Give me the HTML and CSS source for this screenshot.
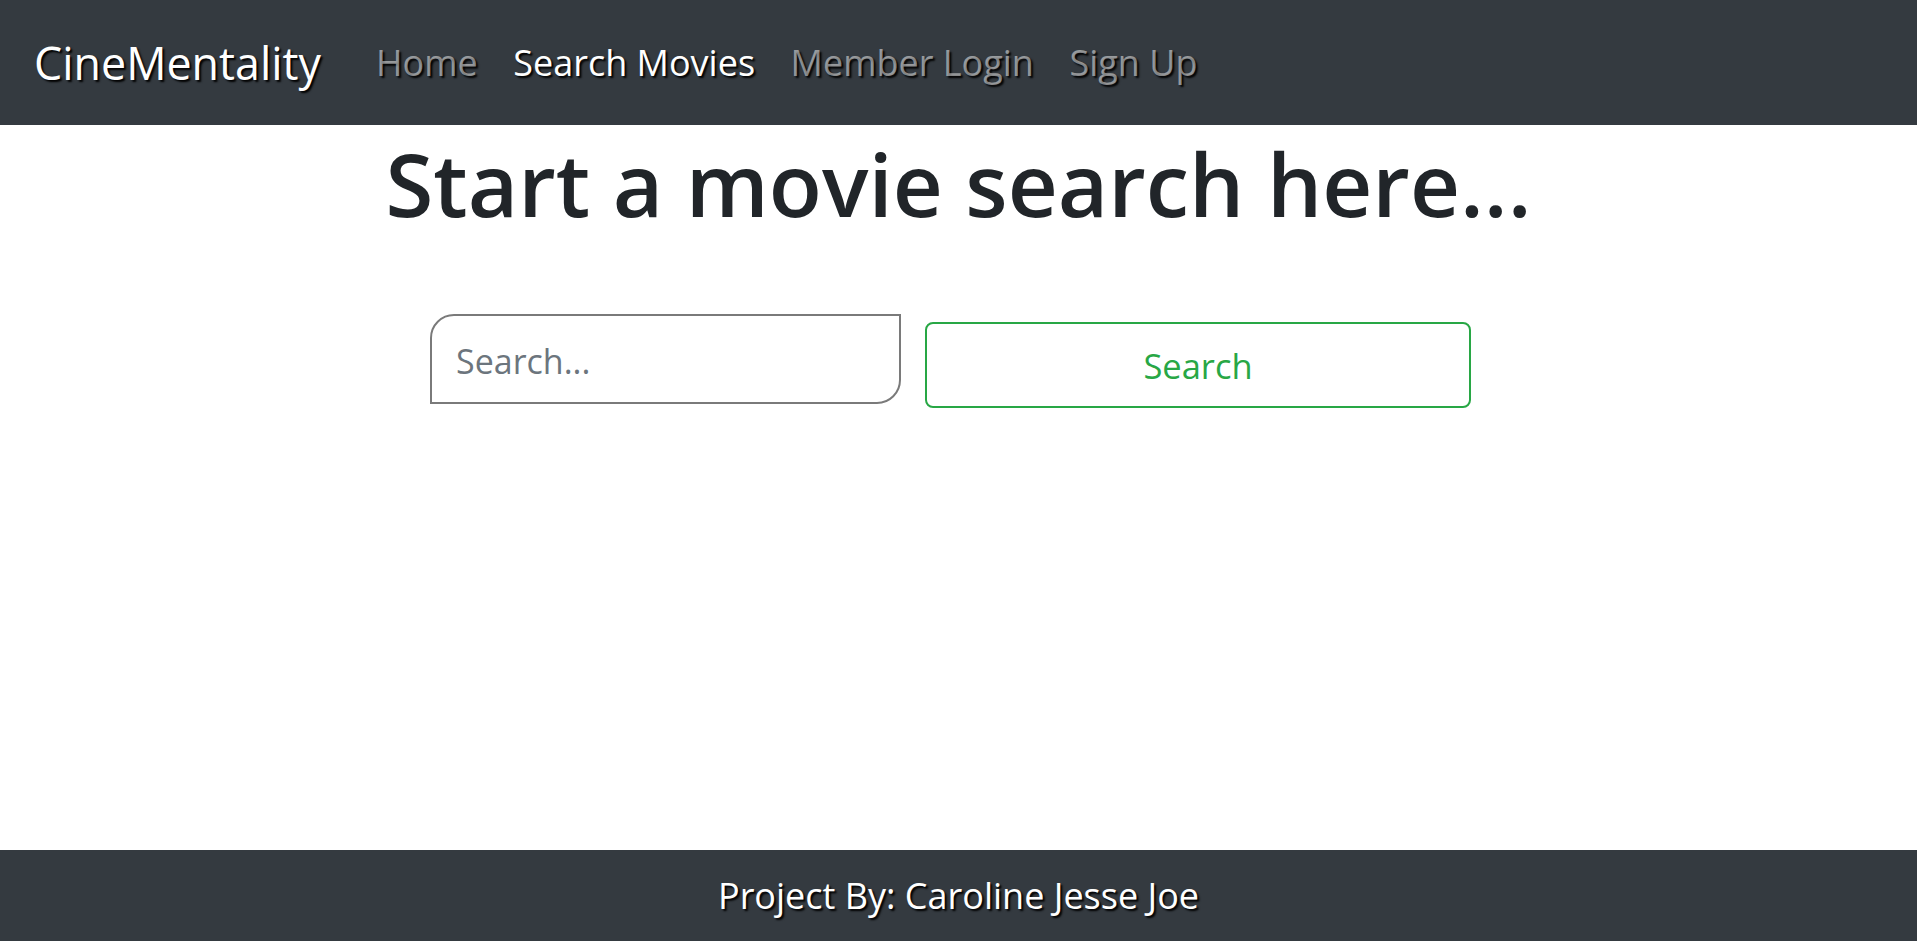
FILE: index.html
```html
<!DOCTYPE html>
<html lang="en">
<head>
<meta charset="utf-8">
<title>CineMentality</title>
<link rel="stylesheet" href="styles.css">
</head>
<body>
<header class="navbar">
  <a class="brand" href="#">CineMentality</a>
  <nav class="nav">
    <a class="nav-link" href="#">Home</a>
    <a class="nav-link active" href="#">Search Movies</a>
    <a class="nav-link" href="#">Member Login</a>
    <a class="nav-link" href="#">Sign Up</a>
  </nav>
</header>
<main class="main">
  <h1 class="title">Start a movie search here...</h1>
  <form class="search-row">
    <input class="search-input" type="text" placeholder="Search...">
    <button class="search-btn" type="button">Search</button>
  </form>
</main>
<footer class="footer">Project By: Caroline Jesse Joe</footer>
</body>
</html>
```
FILE: styles.css
```css
* { box-sizing: border-box; }
html, body { height: 100%; }
body {
  margin: 0;
  font-family: "Open Sans", "Noto Sans", "Liberation Sans", sans-serif;
  color: #212529;
  background: #fff;
  display: flex;
  flex-direction: column;
}
.navbar {
  height: 125px;
  background: #343a40;
  display: flex;
  align-items: center;
  padding: 0 34px;
}
.brand {
  color: #fff;
  text-decoration: none;
  font-size: 44.8px;
  text-shadow: 2px 2px 2px #000;
  margin-right: 55px;
}
.nav { display: flex; gap: 35.5px; }
.nav-link {
  color: rgba(255,255,255,.5);
  text-decoration: none;
  font-size: 36px;
  text-shadow: 2px 2px 2px #000;
}
.nav-link.active { color: #fff; }
.main { flex: 1; display: flex; flex-direction: column; align-items: center; }
.title {
  margin: 6px 0 0;
  font-size: 87px;
  font-weight: 600;
  line-height: 1.2;
  text-align: center;
}
.search-row {
  margin-top: 79px;
  display: flex;
  align-items: flex-start;
  gap: 24px;
  padding-right: 16px;
}
.search-input {
  width: 471px;
  height: 90px;
  border: 2.5px solid #7a7a7a;
  border-radius: 24px 0 24px 0;
  padding: 4px 24px 0;
  font-family: inherit;
  font-size: 34px;
  color: #495057;
  outline: none;
}
.search-input::placeholder { color: #6c757d; }
.search-btn {
  width: 546px;
  height: 86px;
  border: 2px solid #28a745;
  border-radius: 8px;
  background: #fff;
  color: #28a745;
  font-family: inherit;
  font-size: 34.5px;
  margin-top: 8px;
}
.footer {
  height: 91px;
  background: #343a40;
  color: #fff;
  display: flex;
  align-items: center;
  justify-content: center;
  font-size: 36px;
  text-shadow: 2px 2px 2px #000;
}
```
